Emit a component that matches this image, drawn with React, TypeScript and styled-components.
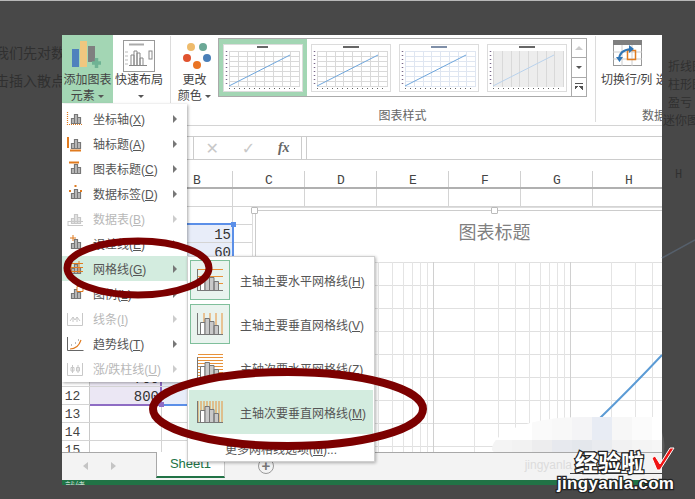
import React from 'react';
import styled, { createGlobalStyle } from 'styled-components';

const GlobalStyle = createGlobalStyle`
    html, body {
        margin: 0;
        padding: 0;
        background: #484848;
    }
    body {
        font-family: "Liberation Sans", "Noto Sans CJK SC", sans-serif;
        font-size: 12px;
    }
`;

const COLUMNS = ['B', 'C', 'D', 'E', 'F', 'G', 'H', 'I'];
const ROWS = Array.from({ length: 15 }, (_, i) => i + 1);

const MENU_ITEMS = [
    { kind: 'axis', label: '坐标轴', key: 'X' },
    { kind: 'axisTitle', label: '轴标题', key: 'A' },
    { kind: 'title', label: '图表标题', key: 'C' },
    { kind: 'dataLabel', label: '数据标签', key: 'D' },
    { kind: 'table', label: '数据表', key: 'B', disabled: true },
    { kind: 'error', label: '误差线', key: 'E' },
    { kind: 'grid', label: '网格线', key: 'G', active: true },
    { kind: 'legend', label: '图例', key: 'L' },
    { kind: 'lines', label: '线条', key: 'I', disabled: true },
    { kind: 'trend', label: '趋势线', key: 'T' },
    { kind: 'updown', label: '涨/跌柱线', key: 'U', disabled: true },
];

const SUB_ITEMS = [
    { kind: 'majorH', label: '主轴主要水平网格线', key: 'H', boxed: true },
    { kind: 'majorV', label: '主轴主要垂直网格线', key: 'V', boxed: true },
    { kind: 'minorH', label: '主轴次要水平网格线', key: 'Z' },
    { kind: 'minorV', label: '主轴次要垂直网格线', key: 'M', active: true },
];

const MOSAIC = [
    '#ffffff', '#ffffff', '#fafafa', '#f8f8f8', '#f4f4f6', '#e8ecf4', '#f7f7f7', '#fbfbfb', '#ffffff',
    '#f4f4f4', '#f2f2f2', '#ededee', '#e7e9ee', '#e4e7ec', '#e9ebef', '#f1f1f2', '#f4f4f4', '#f6f6f6',
];

const MenuIcon = ({ kind, disabled }: { kind: string; disabled?: boolean }) => {
    const gray = disabled ? '#c8c8c8' : '#777';
    const orange = disabled ? '#c8c8c8' : '#e07b1f';
    const plainBars = kind !== 'lines' && kind !== 'updown' && kind !== 'trend';
    return (
        <svg width="20" height="20" viewBox="0 0 20 20">
            {plainBars && (
                <path
                    d="M6.500 14.500v-5h3v5zM9.500 14.500v-9h3v9zM12.500 14.500v-6h3v6z"
                    fill={disabled ? '#e4e4e4' : '#bdbdbd'}
                    stroke={gray}
                    strokeWidth="1.200"
                />
            )}
            {kind === 'axis' && <path d="M2.500 3v12.500h15" fill="none" stroke={orange} strokeWidth="1.200" strokeDasharray="1 1" />}
            {kind === 'axisTitle' && <path d="M3 3v11M5 16.500h11" fill="none" stroke={orange} strokeWidth="2" />}
            {kind === 'title' && <path d="M4 3.500h10" fill="none" stroke={orange} strokeWidth="2" />}
            {kind === 'dataLabel' && <path d="M10.500 1v2M5 6v2M16 6v2" fill="none" stroke={orange} strokeWidth="2" />}
            {kind === 'table' && <path d="M3 12.500h15M3 16.500h15M3 12v5" fill="none" stroke={gray} strokeWidth="1" />}
            {kind === 'error' && <path d="M8 1v6M5 4h6" fill="none" stroke={orange} strokeWidth="1" />}
            {kind === 'grid' && <path d="M3 4.500h15M3 8.500h15M3 12.500h15M6 2v12M14 2v12" fill="none" stroke={orange} strokeWidth="1" />}
            {kind === 'legend' && <path d="M12 2.500h6v5h-6z" fill="#fff" stroke={orange} strokeWidth="1" />}
            {kind === 'lines' && <path d="M2.500 4v12.500h15V4M5 12l3-4 2 3 2-3 3 4M8 8v5M12 8v5" fill="none" stroke={gray} strokeWidth="1" />}
            {kind === 'trend' && (
                <g fill="none">
                    <path d="M2.500 3v13.500h16" stroke="#666" strokeWidth="1" />
                    <path d="M5 15q8 0 11-9" stroke={orange} strokeWidth="1.200" />
                    <path d="M6 11h1M10 9h1M13 6h1" stroke="#777" strokeWidth="1" />
                </g>
            )}
            {kind === 'updown' && <path d="M2.500 4v12.500h15V4M7.500 6v8M13 6v8M6 8.500h3v3.500h-3zM11.500 8.500h3v3.500h-3z" fill="none" stroke={gray} strokeWidth="1" />}
        </svg>
    );
};

const SubIcon = ({ kind }: { kind: string }) => {
    const lines: Record<string, string> = {
        majorH: 'M7 8.500h25M7 15.500h25M7 22.500h25',
        majorV: 'M13 8v22M19 8v22M25 8v22M31 8v22',
        minorH: 'M7 5.500h25M7 8.500h25M7 11.500h25M7 14.500h25M7 17.500h25M7 20.500h25M7 23.500h25M7 26.500h25',
        minorV: 'M7 8v22M10 8v22M13 8v22M16 8v22M19 8v22M22 8v22M25 8v22M28 8v22M31 8v22',
    };
    return (
        <svg width="38" height="38" viewBox="0 0 38 38">
            <path d={lines[kind]} fill="none" stroke="#e8923a" strokeWidth="1" />
            <path d="M9.500 29.500v-12h4.500v12z" fill="#fff" stroke="#777" strokeWidth="1" />
            <path d="M14 29.500v-16h4.500v16zM18.500 29.500v-13h4.500v13zM23 29.500v-9h4.500v9z" fill="#c9c9c9" stroke="#777" strokeWidth="1" />
            <path d="M6 29.500h26M6.500 8v21" fill="none" stroke="#777" strokeWidth="1" />
        </svg>
    );
};

const ChartThumb = ({ tone, wide }: { tone: string; wide?: boolean }) => {
    const xs = Array.from({ length: 9 }, (_, i) => 6 + i * 8.750);
    const ys = Array.from({ length: 8 }, (_, i) => 7 + i * 5);
    const stroke = tone === 'blue' ? '#dfe6f1' : '#d9d9d9';
    return (
        <svg width="80" height="48" viewBox="0 0 80 48">
            <rect x="0.500" y="0.500" width="79" height="47" fill="#fff" stroke="#dcdcdc" />
            <rect x={wide ? 32 : 34} y="2" width={wide ? 16 : 11} height="2" fill={tone === 'blue' ? '#7f8fa8' : '#666'} />
            {tone === 'dots' && <rect x="6" y="7" width="70" height="36" fill="#ededed" />}
            {xs.map(x => <path key={x} d={`M${Math.round(x) + 0.5} 7v36`} stroke={stroke} strokeWidth="1" />)}
            {tone !== 'dots' && ys.map(y => <path key={y} d={`M6 ${y + 0.5}h70`} stroke={stroke} strokeWidth="1" />)}
            <path d="M6 42L67 11" stroke={tone === 'dots' ? '#b9d2ec' : '#6fa6dc'} strokeWidth="1" />
            <path d="M3.500 7v36" stroke="#7a6a8a" strokeWidth="1.500" strokeDasharray="1 3" />
            <path d="M6 44.500h70" stroke="#666" strokeWidth="1" strokeDasharray="1 4" />
        </svg>
    );
};

const App = () => {
    return (
        <Page>
            <GlobalStyle />
            <LeftGutter>
                <GhostLine>我们先对数</GhostLine>
                <GhostLine>击插入散点</GhostLine>
            </LeftGutter>

            <Window>
                <Ribbon>
                    <BigButton $width={51} $active>
                        <svg width="32" height="32" viewBox="0 0 32 32">
                            <rect x="0" y="9" width="7" height="18" fill="#4f81bd" />
                            <rect x="8" y="1" width="7" height="26" fill="#f0c77f" />
                            <rect x="16" y="6" width="7" height="16" fill="#7f7f7f" />
                            <path d="M20 23h9M24.500 18v10" stroke="#6fb394" strokeWidth="3.500" />
                        </svg>
                        <ButtonText>添加图表</ButtonText>
                        <ButtonText>元素 <Caret /></ButtonText>
                    </BigButton>
                    <BigButton $width={52} $gapRight={5}>
                        <svg width="32" height="32" viewBox="0 0 32 32">
                            <rect x="0.500" y="0.500" width="31" height="31" fill="#fff" stroke="#999" />
                            <path d="M6 4.500h15" stroke="#aaa" strokeWidth="2" />
                            <path d="M2 12h3M2 16h3M2 20h3M2 24h3" stroke="#bbb" />
                            <path d="M6 25.500h18M8 25v-10h3v10M11 25v-14h3v14M14 25v-12h3v12M17 25v-7h3v7" fill="none" stroke="#888" />
                            <rect x="26" y="11" width="3" height="8" fill="none" stroke="#888" />
                        </svg>
                        <ButtonText>快速布局</ButtonText>
                        <ButtonText $indent={4}><Caret /></ButtonText>
                    </BigButton>
                    <Divider $height={67} />
                    <BigButton $width={47}>
                        <svg width="32" height="32" viewBox="0 0 32 32">
                            <circle cx="12" cy="7" r="4" fill="#eebb6c" />
                            <circle cx="24" cy="7" r="4" fill="#6ba896" />
                            <circle cx="8" cy="18" r="4" fill="#e0532f" />
                            <circle cx="28" cy="18" r="4" fill="#4a7fb8" />
                            <circle cx="18" cy="25" r="4" fill="#ea7424" />
                        </svg>
                        <ButtonText>更改</ButtonText>
                        <ButtonText>颜色 <Caret /></ButtonText>
                    </BigButton>
                    <GalleryGroup>
                        <Gallery>
                            <ThumbSlot $selected><ChartThumb tone="plain" /></ThumbSlot>
                            <ThumbSlot><ChartThumb tone="plain" wide /></ThumbSlot>
                            <ThumbSlot><ChartThumb tone="blue" wide /></ThumbSlot>
                            <ThumbSlot><ChartThumb tone="dots" wide /></ThumbSlot>
                            <Scroller>
                                <ScrollStep><UpCaret /></ScrollStep>
                                <ScrollStep><Caret /></ScrollStep>
                                <ScrollStep><MoreCaret /></ScrollStep>
                            </Scroller>
                        </Gallery>
                        <GroupCaption>图表样式</GroupCaption>
                    </GalleryGroup>
                    <Divider $height={86} $left={8} />
                    <DataGroup>
                        <svg width="30" height="27" viewBox="0 0 30 27">
                            <rect x="0.500" y="0.500" width="28" height="25" fill="#fff" stroke="#999" />
                            <rect x="0" y="0" width="29" height="5" fill="#7f7f7f" />
                            <path d="M0 12h29M0 19h29M9 5v21M19 5v21" stroke="#ccc" />
                            <rect x="14.500" y="10.500" width="8" height="9" fill="none" stroke="#e07b1f" strokeWidth="1.500" />
                            <path d="M6 20q0-10 12-11" fill="none" stroke="#2f75b5" strokeWidth="2" />
                            <path d="M16 5l5 4-5 4zM3 17h7l-3.500 5z" fill="#2f75b5" />
                        </svg>
                        <DataLabel>切换行/列 选择</DataLabel>
                        <DataCaption>数据</DataCaption>
                    </DataGroup>
                </Ribbon>

                <FormulaBar>
                    <FormulaButtons>
                        <FormulaIcon>✕</FormulaIcon>
                        <FormulaIcon>✓</FormulaIcon>
                        <FxLabel>fx</FxLabel>
                    </FormulaButtons>
                    <FormulaInput />
                </FormulaBar>

                <ColumnHeader>
                    <CornerCell />
                    <HeadCell $width={71} />
                    {COLUMNS.map(c => <HeadCell key={c} $width={72}>{c}</HeadCell>)}
                </ColumnHeader>

                <Sheet>
                    {ROWS.map(row => (
                        <SheetRow key={row}>
                            <RowNumber>{row}</RowNumber>
                            <Cell $width={72} $tone={row >= 3 && row <= 12 ? 'purple' : undefined} $edge={row >= 3 && row <= 12}>
                                {row === 12 ? '800' : row === 11 ? '700' : ''}
                            </Cell>
                            <Cell $width={71} $tone={row >= 3 && row <= 12 ? 'blue' : undefined}>
                                {row === 3 ? '15' : row === 4 ? '60' : ''}
                            </Cell>
                            {COLUMNS.slice(1).map(c => <Cell key={c} $width={72} />)}
                        </SheetRow>
                    ))}
                    <BlueEdgeTop />
                    <BlueEdgeRight />
                    <BlueHandle />
                    <BlueEdgeBottom />
                    <PurpleEdgeBottom />
                    <PurpleHandle />
                    <ChartFrame>
                        <FrameHandle $pos="corner" />
                        <FrameHandle $pos="middle" />
                        <ChartTitle>图表标题</ChartTitle>
                        <svg width="420" height="192" viewBox="0 0 420 192">
                            {[0, 23, 46, 69, 92, 115, 138, 161, 184].map(y => (
                                <path key={y} d={`M0 ${y + 0.5}h420`} stroke="#e0e0e0" />
                            ))}
                            {[-137, 0, 137, 274].flatMap(m => [1, 2, 3, 4, 5, 6, 7, 8, 9].map(k => {
                                const x = Math.round(40 + m + 137 * Math.log10(k));
                                return <path key={`${m}-${k}`} d={`M${x + 0.5} 0v190`} stroke={k === 1 ? '#d0d0d0' : '#e4e4e4'} />;
                            }))}
                            <path d="M342 158Q376 125 406 93" fill="none" stroke="#5b9bd5" strokeWidth="2" />
                        </svg>
                    </ChartFrame>
                    <Mosaic>
                        {MOSAIC.map((c, i) => <MosaicCell key={i} $color={c} />)}
                    </Mosaic>
                </Sheet>

                <TabBar>
                    <TabNav>
                        <NavArrow $dir="left" />
                        <NavArrow $dir="right" />
                    </TabNav>
                    <SheetTab>Sheet1</SheetTab>
                    <AddSheet>+</AddSheet>
                    <GhostMark>jingyanla</GhostMark>
                </TabBar>
                <StatusBar>就绪</StatusBar>

                <Menu>
                    {MENU_ITEMS.map(item => (
                        <MenuRow key={item.label} $active={item.active} $disabled={item.disabled}>
                            <MenuIconSlot><MenuIcon kind={item.kind} disabled={item.disabled} /></MenuIconSlot>
                            <MenuLabel>{item.label}(<u>{item.key}</u>)</MenuLabel>
                            <MenuArrow $disabled={item.disabled} />
                        </MenuRow>
                    ))}
                </Menu>

                <SubMenu>
                    {SUB_ITEMS.map(item => (
                        <SubRow key={item.kind} $active={item.active}>
                            <SubIconBox $boxed={item.boxed}><SubIcon kind={item.kind} /></SubIconBox>
                            <span>{item.label}(<u>{item.key}</u>)</span>
                        </SubRow>
                    ))}
                    <SubMore>更多网格线选项(<u>M</u>)...</SubMore>
                </SubMenu>
            </Window>

            <RightGutter>
                <GhostLine $small>折线图</GhostLine>
                <GhostLine $small>柱形图</GhostLine>
                <GhostLine $small>盈亏</GhostLine>
                <GhostLine $small $pull={5}>迷你图</GhostLine>
                <GhostColumn>H</GhostColumn>
            </RightGutter>

            <Annotations width="695" height="499" viewBox="0 0 695 499">
                <ellipse cx="138" cy="268" rx="71" ry="27" fill="none" stroke="#7c0000" strokeWidth="7" />
                <ellipse cx="288" cy="409" rx="135" ry="37" fill="none" stroke="#7c0000" strokeWidth="8" />
                <path d="M662 258L695 240" stroke="#56606c" strokeWidth="1.500" />
                <path d="M662 432q5 14 0 28z" fill="#5c5c5c" />
                <path d="M570 473.500h92" stroke="#444" strokeWidth="1" />
                <path d="M652 458l3-2 5 8 10-16h4L660 470h-3z" fill="#f01414" stroke="#fff" strokeWidth="1" />
            </Annotations>
            <Watermark>
                <WatermarkCn>经验啦</WatermarkCn>
                <WatermarkEn>jingyanla.com</WatermarkEn>
            </Watermark>
        </Page>
    );
};
export default App;

const Page = styled.div`
    position: relative;
    display: flex;
    align-items: flex-start;
    width: 695px;
    height: 499px;
    overflow: hidden;
    background: #484848;
    border-top: 1px solid #b8b8b8;
    box-sizing: border-box;
`;

const LeftGutter = styled.div`
    width: 62px;
    padding-top: 43px;
    overflow: hidden;
    display: flex;
    flex-direction: column;
    gap: 10px;
    flex-shrink: 0;
    margin-top: 0;

    & > div {
        margin-left: -5px;
        font-size: 14px;
    }
`;

const GhostLine = styled.div<{ $small?: boolean; $pull?: number }>`
    font-size: 12px;
    line-height: 18px;
    margin-left: ${props => -(props.$pull ?? 0)}px;
    color: #303030;
    white-space: nowrap;
`;

const RightGutter = styled.div`
    width: 33px;
    padding: 57px 0 0 6px;
    box-sizing: border-box;
    overflow: hidden;
    flex-shrink: 0;
`;

const GhostColumn = styled.div`
    margin: 38px 0 0 7px;
    font-family: "Liberation Mono", monospace;
    color: #303030;
`;

const Window = styled.div`
    position: relative;
    width: 600px;
    height: 450px;
    margin-top: 34px;
    flex-shrink: 0;
    overflow: hidden;
    background: #fff;
    color: #444;
`;

const Ribbon = styled.div`
    display: flex;
    height: 91px;
    box-sizing: border-box;
    border-bottom: 1px solid #d4d4d4;
`;

const BigButton = styled.div<{ $width: number; $active?: boolean; $gapRight?: number }>`
    width: ${props => props.$width}px;
    height: 68px;
    margin-right: ${props => props.$gapRight ?? 0}px;
    padding-top: 5px;
    box-sizing: border-box;
    display: flex;
    flex-direction: column;
    align-items: center;
    flex-shrink: 0;
    background: ${props => (props.$active ? '#a3d6b4' : 'transparent')};

    & > svg {
        flex-shrink: 0;
    }
`;

const ButtonText = styled.div<{ $indent?: number }>`
    height: 16px;
    line-height: 16px;
    padding-left: ${props => props.$indent ?? 0}px;
    white-space: nowrap;
    color: #444;
`;

const Caret = styled.span`
    display: inline-block;
    vertical-align: middle;
    border-left: 3.5px solid transparent;
    border-right: 3.5px solid transparent;
    border-top: 3.5px solid #555;
`;

const UpCaret = styled.span`
    border-left: 4px solid transparent;
    border-right: 4px solid transparent;
    border-bottom: 4px solid #ccc;
`;

const MoreCaret = styled.span`
    display: inline-block;
    width: 8px;
    height: 7px;
    box-sizing: border-box;
    border-top: 1px solid #555;
    background: linear-gradient(to bottom right, #555 50%, transparent 50%) left 2px / 50% 4px no-repeat,
        linear-gradient(to bottom left, #555 50%, transparent 50%) right 2px / 50% 4px no-repeat;
`;

const Divider = styled.div<{ $height: number; $left?: number }>`
    width: 1px;
    height: ${props => props.$height}px;
    margin: 1px 0 0 ${props => props.$left ?? 0}px;
    background: #dcdcdc;
    flex-shrink: 0;
`;

const GalleryGroup = styled.div`
    width: 369px;
    flex-shrink: 0;
    padding-top: 3px;
    display: flex;
    flex-direction: column;
`;

const Gallery = styled.div`
    display: flex;
    align-items: center;
    height: 59px;
    box-sizing: border-box;
    border: 1px solid #aaa;
`;

const ThumbSlot = styled.div<{ $selected?: boolean }>`
    width: 88px;
    height: 100%;
    display: flex;
    align-items: center;
    justify-content: center;
    box-sizing: border-box;
    background: ${props => (props.$selected ? '#a3d6b4' : '#fff')};

    & > svg {
        display: block;
    }
`;

const Scroller = styled.div`
    margin-left: auto;
    width: 14px;
    height: 100%;
    display: flex;
    flex-direction: column;
    border-left: 1px solid #aaa;
`;

const ScrollStep = styled.div`
    flex: 1;
    display: flex;
    align-items: center;
    justify-content: center;

    & + & {
        border-top: 1px solid #aaa;
    }
`;

const GroupCaption = styled.div`
    margin-top: 12px;
    text-align: center;
    color: #666;
    line-height: 14px;
`;

const DataGroup = styled.div`
    width: 66px;
    display: flex;
    flex-direction: column;
    align-items: flex-start;
    padding: 5px 0 0 5px;
    box-sizing: border-box;
    overflow: hidden;

    & > svg {
        margin-left: 12px;
        flex-shrink: 0;
    }
`;

const DataLabel = styled.div`
    margin-top: 5px;
    white-space: nowrap;
    line-height: 16px;
`;

const DataCaption = styled.div`
    margin: 21px 0 0 41px;
    line-height: 14px;
    color: #666;
    white-space: nowrap;
`;

const FormulaBar = styled.div`
    display: flex;
    height: 24px;
    margin-top: 10px;
    padding-left: 131px;
    box-sizing: border-box;
    border-top: 1px solid #ccc;
    border-bottom: 1px solid #ccc;
`;

const FormulaButtons = styled.div`
    width: 109px;
    display: flex;
    align-items: center;
    justify-content: space-around;
    box-sizing: border-box;
    border-left: 1px solid #ccc;
    border-right: 1px solid #ccc;
`;

const FormulaIcon = styled.span`
    font-size: 16px;
    font-weight: bold;
    color: #c8c8c8;
    font-family: "DejaVu Sans", sans-serif;
`;

const FxLabel = styled.span`
    font-family: "Liberation Serif", serif;
    font-style: italic;
    font-weight: bold;
    font-size: 14px;
    color: #666;
`;

const FormulaInput = styled.div`
    flex: 1;
    margin-left: 4px;
    border-left: 1px solid #ccc;
`;

const ColumnHeader = styled.div`
    display: flex;
    height: 18px;
    margin-top: 11px;
    box-sizing: border-box;
    border-bottom: 2px solid #b0b0b0;
    width: 700px;
`;

const CornerCell = styled.div`
    width: 28px;
    flex-shrink: 0;
`;

const HeadCell = styled.div<{ $width: number }>`
    width: ${props => props.$width}px;
    flex-shrink: 0;
    box-sizing: border-box;
    border-right: 1px solid #d0d0d0;
    padding-left: 1px;
    text-align: center;
    font-family: "Liberation Mono", monospace;
    font-size: 13px;
    line-height: 20px;
    color: #444;
`;

const Sheet = styled.div`
    position: relative;
    height: 263px;
    overflow: hidden;
`;

const SheetRow = styled.div`
    display: flex;
    height: 18px;
    box-sizing: border-box;
    border-bottom: 1px solid #d4d4d4;
    width: 700px;
`;

const RowNumber = styled.div`
    width: 28px;
    flex-shrink: 0;
    box-sizing: border-box;
    border-right: 1px solid #c8c8c8;
    padding-right: 6px;
    text-align: center;
    font-family: "Liberation Mono", monospace;
    font-size: 13px;
    line-height: 19px;
    color: #444;
`;

const Cell = styled.div<{ $width: number; $tone?: string; $edge?: boolean }>`
    width: ${props => props.$width}px;
    flex-shrink: 0;
    box-sizing: border-box;
    border-right: ${props => (props.$edge ? '2px solid #8e6cc4' : '1px solid #d4d4d4')};
    padding-right: 1px;
    text-align: right;
    font-family: "Liberation Mono", monospace;
    font-size: 14px;
    line-height: 20px;
    color: #333;
    background: ${props => (props.$tone === 'purple' ? '#ebe7f4' : props.$tone === 'blue' ? '#e8edf9' : 'transparent')};
`;

const BlueEdgeTop = styled.div`
    position: absolute;
    left: 100px;
    top: 34px;
    width: 71px;
    height: 2px;
    background: #5b8fe8;
`;

const BlueEdgeRight = styled.div`
    position: absolute;
    left: 170px;
    top: 36px;
    width: 2px;
    height: 180px;
    background: #5b8fe8;
`;

const BlueHandle = styled.div`
    position: absolute;
    left: 169px;
    top: 33px;
    width: 5px;
    height: 5px;
    background: #5b8fe8;
`;

const BlueEdgeBottom = styled.div`
    position: absolute;
    left: 100px;
    top: 215px;
    width: 71px;
    height: 2px;
    background: #5b8fe8;
`;

const PurpleEdgeBottom = styled.div`
    position: absolute;
    left: 28px;
    top: 215px;
    width: 72px;
    height: 2px;
    background: #8e6cc4;
`;

const PurpleHandle = styled.div`
    position: absolute;
    left: 97px;
    top: 213px;
    width: 5px;
    height: 5px;
    background: #8e6cc4;
`;

const ChartFrame = styled.div`
    position: absolute;
    left: 193px;
    top: 21px;
    width: 420px;
    height: 250px;
    background: #fff;
    box-sizing: border-box;
    border-left: 1px solid #ccc;
    border-top: 1px solid #ccc;
    box-shadow: -2px -2px 0 #fff, -3px -3px 0 #ddd;

    & > svg {
        display: block;
    }
`;

const FrameHandle = styled.div<{ $pos: string }>`
    position: absolute;
    top: -4px;
    left: ${props => (props.$pos === 'corner' ? -5 : 235)}px;
    width: 5px;
    height: 5px;
    background: #fff;
    border: 1px solid #bbb;
    border-radius: 1px;
`;

const ChartTitle = styled.div`
    height: 51px;
    text-align: center;
    padding-left: 58px;
    font-size: 18px;
    line-height: 44px;
    color: #7f7f7f;
`;

const Mosaic = styled.div`
    position: absolute;
    left: 430px;
    top: 228px;
    width: 180px;
    height: 46px;
    display: grid;
    grid-template-columns: repeat(9, 20px);
    grid-auto-rows: 23px;
    border-radius: 50% 0 0 50% / 70% 0 0 30%;
    overflow: hidden;
`;

const MosaicCell = styled.div<{ $color: string }>`
    background: ${props => props.$color};
`;

const TabBar = styled.div`
    display: flex;
    align-items: flex-start;
    height: 28px;
    box-sizing: border-box;
    background: #f3f3f3;
    border-top: 1px solid #a8a8a8;
`;

const TabNav = styled.div`
    width: 94px;
    height: 26px;
    padding-left: 21px;
    box-sizing: border-box;
    display: flex;
    align-items: center;
    gap: 23px;
`;

const NavArrow = styled.span<{ $dir: string }>`
    border-top: 4px solid transparent;
    border-bottom: 4px solid transparent;
    border-right: ${props => (props.$dir === 'left' ? '5px solid #c4c4c4' : '0')};
    border-left: ${props => (props.$dir === 'right' ? '5px solid #c4c4c4' : '0')};
`;

const SheetTab = styled.div`
    width: 69px;
    height: 26px;
    margin-top: -1px;
    box-sizing: border-box;
    background: #fff;
    border-left: 1px solid #a8a8a8;
    border-right: 1px solid #c8c8c8;
    border-bottom: 2px solid #217346;
    text-align: center;
    line-height: 24px;
    font-size: 13px;
    color: #217346;
`;

const AddSheet = styled.div`
    width: 14px;
    height: 14px;
    margin: 5px 0 0 33px;
    border: 1px solid #999;
    border-radius: 50%;
    color: #777;
    text-align: center;
    line-height: 13px;
    font-size: 15px;
    font-weight: bold;
`;

const GhostMark = styled.div`
    margin: 5px 90px 0 auto;
    font-size: 12px;
    color: #dcdcdc;
`;

const StatusBar = styled.div`
    height: 5px;
    padding-left: 3px;
    overflow: hidden;
    background: #217346;
    color: #b9d6c6;
    font-size: 10px;
    line-height: 13px;
`;

const Menu = styled.div`
    position: absolute;
    left: 0;
    top: 69px;
    width: 125px;
    box-sizing: border-box;
    padding: 2px 0 0;
    height: 278px;
    background: #fff;
    box-shadow: 1px 1px 3px rgba(0, 0, 0, 0.35);
`;

const MenuRow = styled.div<{ $active?: boolean; $disabled?: boolean }>`
    display: flex;
    align-items: center;
    height: 25px;
    color: ${props => (props.$disabled ? '#b8b8b8' : '#555')};
    background: ${props => (props.$active ? '#d3ecdf' : 'transparent')};
`;

const MenuIconSlot = styled.div`
    width: 31px;
    padding-left: 3px;
    flex-shrink: 0;
    box-sizing: border-box;
    height: 20px;
`;

const MenuLabel = styled.div`
    flex: 1;
    white-space: nowrap;
`;

const MenuArrow = styled.span<{ $disabled?: boolean }>`
    margin-right: 10px;
    border-top: 4px solid transparent;
    border-bottom: 4px solid transparent;
    border-left: 4px solid ${props => (props.$disabled ? '#ccc' : '#777')};
`;

const SubMenu = styled.div`
    position: absolute;
    left: 125px;
    top: 221px;
    width: 188px;
    height: 206px;
    box-sizing: border-box;
    padding: 1px 1px 0;
    background: #fff;
    border: 1px solid #cfcfcf;
    box-shadow: 1px 1px 3px rgba(0, 0, 0, 0.3);
`;

const SubRow = styled.div<{ $active?: boolean }>`
    display: flex;
    align-items: center;
    gap: 10px;
    height: 44px;
    padding-left: 1px;
    white-space: nowrap;
    color: #555;
    background: ${props => (props.$active ? '#d3ecdf' : 'transparent')};
`;

const SubIconBox = styled.div<{ $boxed?: boolean }>`
    width: 40px;
    height: 40px;
    box-sizing: border-box;
    display: flex;
    align-items: center;
    justify-content: center;
    border: 1px solid ${props => (props.$boxed ? '#7fbf9b' : 'transparent')};
    background: ${props => (props.$boxed ? '#e9f3ee' : 'transparent')};
`;

const SubMore = styled.div`
    margin-top: 8px;
    text-align: center;
    color: #555;
    line-height: 16px;
`;

const Annotations = styled.svg`
    position: absolute;
    left: 0;
    top: -1px;
    pointer-events: none;
`;

const Watermark = styled.div`
    position: absolute;
    left: 557px;
    top: 448px;
    width: 125px;
`;

const WatermarkCn = styled.div`
    margin-left: 18px;
    font-family: "Noto Sans CJK SC", sans-serif;
    font-weight: 700;
    font-size: 23px;
    line-height: 25px;
    color: #fff;
    -webkit-text-stroke: 2.500px #222;
    paint-order: stroke fill;
`;

const WatermarkEn = styled.div`
    font-weight: 700;
    font-size: 17px;
    line-height: 19px;
    color: #fff;
    letter-spacing: 0.3px;
    white-space: nowrap;
    -webkit-text-stroke: 2.500px #222;
    paint-order: stroke fill;
`;
